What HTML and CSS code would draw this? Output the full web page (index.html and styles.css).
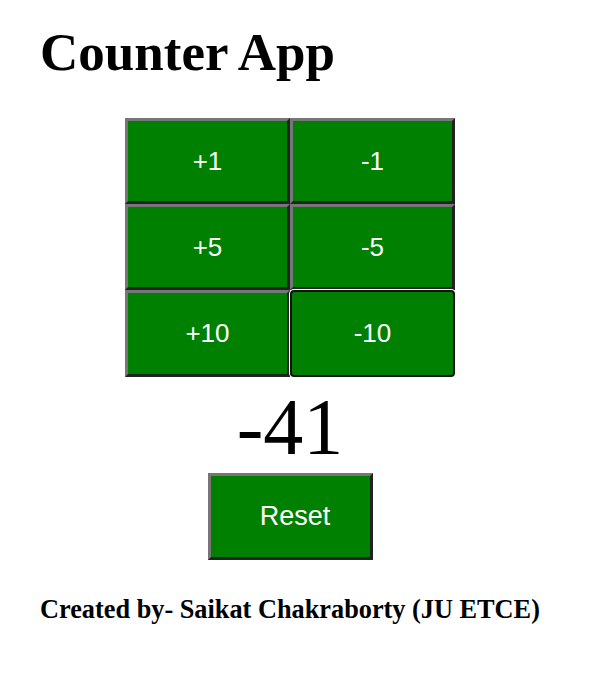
FILE: index.html
```html
<!DOCTYPE html>
<html lang="en">
<head>
<meta charset="utf-8">
<title>Counter App</title>
<link rel="stylesheet" href="styles.css">
</head>
<body>
<main class="app">
  <h1 class="title">Counter App</h1>
  <div class="pad">
    <button class="btn">+1</button>
    <button class="btn">-1</button>
    <button class="btn">+5</button>
    <button class="btn">-5</button>
    <button class="btn">+10</button>
    <button class="btn is-focused">-10</button>
  </div>
  <div class="count">-41</div>
  <button class="btn reset">Reset</button>
  <p class="credit">Created by- Saikat Chakraborty (JU ETCE)</p>
</main>
</body>
</html>
```
FILE: styles.css
```css
html, body {
  margin: 0;
  padding: 0;
  background: #ffffff;
}

.app {
  width: 500px;
  padding: 22px 40px 0 40px;
  display: flex;
  flex-direction: column;
  align-items: center;
  font-family: "Liberation Serif", "Times New Roman", serif;
  color: #000;
}

.title {
  align-self: flex-start;
  margin: 0;
  font-size: 53px;
  line-height: 60px;
  font-weight: bold;
}

.pad {
  margin-top: 36px;
  display: grid;
  grid-template-columns: 165px 165px;
  grid-template-rows: 86px 86px 87px;
}

.btn {
  box-sizing: border-box;
  width: 165px;
  height: 86px;
  margin: 0;
  padding: 0;
  background: #008000;
  color: #ffffff;
  font-family: "Liberation Sans", Arial, sans-serif;
  font-size: 26px;
  border-style: solid;
  border-width: 3px;
  border-color: #767676 #222222 #222222 #767676;
  cursor: pointer;
}

.pad .btn {
  height: 100%;
}

.btn.is-focused {
  border: 2px solid #111111;
  border-radius: 4px;
  box-shadow: 0 0 0 1px #ffffff;
  position: relative;
}

.count {
  padding-top: 5px;
  font-size: 80px;
  line-height: 91px;
}

.reset {
  height: 87px;
  padding-left: 10px;
  font-size: 27px;
}

.credit {
  align-self: flex-start;
  margin: 35px 0 0 0;
  font-size: 26.3px;
  line-height: 30px;
  font-weight: bold;
  white-space: nowrap;
}
```
